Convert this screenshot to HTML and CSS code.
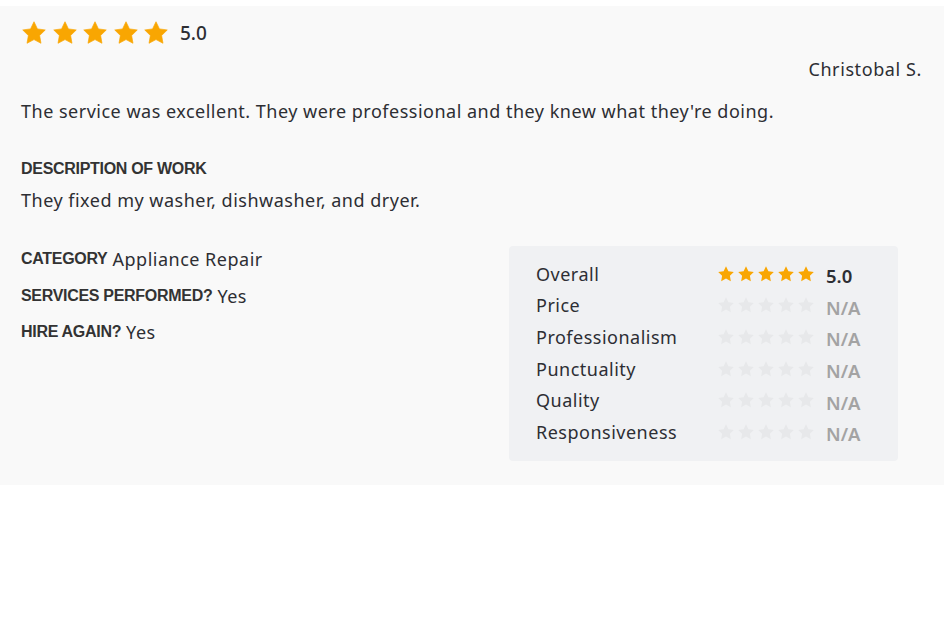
FILE: index.html
```html
<!DOCTYPE html>
<html>
<head>
<meta charset="utf-8">
<link rel="stylesheet" href="styles.css">
</head>
<body>
<svg width="0" height="0" class="defs">
  <defs>
    <symbol id="star" viewBox="0 0 24 24"><path d="M12 1.6l3.2 6.6 7.2 1-5.2 5.1 1.25 7.2L12 18.1l-6.45 3.4 1.25-7.2L1.6 9.2l7.2-1z" stroke-linejoin="round"/></symbol>
  </defs>
</svg>
<div class="card">
  <div class="top-rating">
    <div class="stars big">
      <svg><use href="#star"/></svg><svg><use href="#star"/></svg><svg><use href="#star"/></svg><svg><use href="#star"/></svg><svg><use href="#star"/></svg>
    </div>
    <span class="top-score">5.0</span>
  </div>
  <div class="author">Christobal S.</div>
  <p class="review">The service was excellent. They were professional and they knew what they're doing.</p>
  <div class="label desc-label">DESCRIPTION OF WORK</div>
  <p class="desc">They fixed my washer, dishwasher, and dryer.</p>
  <div class="details">
    <div class="facts">
      <div class="fact"><span class="label">CATEGORY</span> <span class="val">Appliance Repair</span></div>
      <div class="fact"><span class="label">SERVICES PERFORMED?</span> <span class="val">Yes</span></div>
      <div class="fact"><span class="label">HIRE AGAIN?</span> <span class="val">Yes</span></div>
    </div>
    <div class="panel">
      <div class="row"><span class="name">Overall</span><span class="stars small on"><svg><use href="#star"/></svg><svg><use href="#star"/></svg><svg><use href="#star"/></svg><svg><use href="#star"/></svg><svg><use href="#star"/></svg></span><span class="score">5.0</span></div>
      <div class="row"><span class="name">Price</span><span class="stars small off"><svg><use href="#star"/></svg><svg><use href="#star"/></svg><svg><use href="#star"/></svg><svg><use href="#star"/></svg><svg><use href="#star"/></svg></span><span class="score na">N/A</span></div>
      <div class="row"><span class="name">Professionalism</span><span class="stars small off"><svg><use href="#star"/></svg><svg><use href="#star"/></svg><svg><use href="#star"/></svg><svg><use href="#star"/></svg><svg><use href="#star"/></svg></span><span class="score na">N/A</span></div>
      <div class="row"><span class="name">Punctuality</span><span class="stars small off"><svg><use href="#star"/></svg><svg><use href="#star"/></svg><svg><use href="#star"/></svg><svg><use href="#star"/></svg><svg><use href="#star"/></svg></span><span class="score na">N/A</span></div>
      <div class="row"><span class="name">Quality</span><span class="stars small off"><svg><use href="#star"/></svg><svg><use href="#star"/></svg><svg><use href="#star"/></svg><svg><use href="#star"/></svg><svg><use href="#star"/></svg></span><span class="score na">N/A</span></div>
      <div class="row"><span class="name">Responsiveness</span><span class="stars small off"><svg><use href="#star"/></svg><svg><use href="#star"/></svg><svg><use href="#star"/></svg><svg><use href="#star"/></svg><svg><use href="#star"/></svg></span><span class="score na">N/A</span></div>
    </div>
  </div>
</div>
</body>
</html>
```
FILE: styles.css
```css
html, body {
  margin: 0;
  padding: 0;
  background: #ffffff;
}
body {
  font-family: "Noto Sans", "Open Sans", sans-serif;
  color: #2d2e33;
  padding-top: 6px;
}
.defs {
  position: absolute;
  width: 0;
  height: 0;
}
.card {
  background: #f9f9f9;
  padding: 14px 22px 24px 21px;
  height: 441px;
}
.top-rating {
  display: flex;
  align-items: center;
  height: 26px;
}
.stars {
  display: flex;
}
.stars svg {
  display: block;
}
.stars.big {
  gap: 4.5px;
}
.stars.big svg {
  width: 26px;
  height: 26px;
  fill: #f9a602;
  stroke: #f9a602;
  stroke-width: 0.6;
}
.top-score {
  margin-left: 11px;
  font-size: 19px;
  font-weight: 500;
  color: #2d2e33;
}
.author {
  margin-top: 11px;
  text-align: right;
  font-size: 18px;
  letter-spacing: 0.6px;
  line-height: 24px;
}
.review {
  margin: 17px 0 0;
  font-size: 18px;
  letter-spacing: 0.5px;
  line-height: 26px;
}
.label {
  font-family: "Liberation Sans", Arial, sans-serif;
  font-weight: 700;
  font-size: 16px;
  letter-spacing: -0.3px;
  color: #333;
}
.desc-label {
  margin-top: 34px;
  line-height: 22px;
}
.desc {
  margin: 7px 0 0;
  font-size: 18px;
  letter-spacing: 0.5px;
  line-height: 26px;
}
.details {
  margin-top: 33px;
  display: flex;
  align-items: flex-start;
}
.facts {
  flex: 1;
  display: flex;
  flex-direction: column;
  gap: 12.5px;
}
.fact {
  line-height: 22px;
  display: flex;
  align-items: baseline;
  gap: 5px;
}
.fact .val {
  font-size: 18px;
  letter-spacing: 0.5px;
  position: relative;
  top: 2px;
}
.panel {
  width: 335px;
  margin-right: 24px;
  background: #f0f1f3;
  border-radius: 4px;
  padding: 12px 27px 13px 27px;
}
.row {
  display: flex;
  align-items: center;
  height: 31.6px;
}
.name {
  width: 181px;
  font-size: 18px;
  letter-spacing: 0.5px;
}
.stars.small {
  gap: 2px;
}
.stars.small svg {
  width: 18px;
  height: 18px;
}
.stars.on svg {
  fill: #f9a602;
}
.stars.off svg {
  fill: #e7e8ea;
}
.score {
  margin-left: 11px;
  font-size: 18.5px;
  font-weight: 600;
  color: #2d2e33;
  position: relative;
  top: 2px;
}
.score.na {
  color: #a3a3a3;
}
```
